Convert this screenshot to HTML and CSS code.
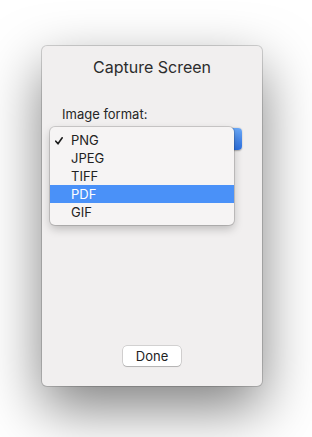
FILE: index.html
```html
<!DOCTYPE html>
<html lang="en">
<head>
    <meta charset="UTF-8">
    <meta name="viewport" content="width=device-width, initial-scale=1.0">
    <title>Capture Screen</title>
    <link rel="stylesheet" href="styles.css">
</head>
<body>
    <div class="window">
        <h1 class="title">Capture Screen</h1>
        <label class="field-label">Image format:</label>

        <div class="popup">
            <div class="popup-arrows"></div>

            <!-- open menu lies over the popup button -->
            <ul class="menu">
                <li class="menu-item checked">
                    <svg class="check" width="8" height="8" viewBox="0 0 8 8">
                        <polyline points="0.8,4.2 3,6.8 7.2,0.8" fill="none" stroke="#1d1d1d" stroke-width="1.6" stroke-linecap="round" stroke-linejoin="round"/>
                    </svg>
                    PNG
                </li>
                <li class="menu-item">JPEG</li>
                <li class="menu-item">TIFF</li>
                <li class="menu-item active">PDF</li>
                <li class="menu-item">GIF</li>
            </ul>
        </div>

        <button class="btn">Done</button>
    </div>
</body>
</html>
```

FILE: styles.css
```css
* {
    margin: 0;
    padding: 0;
    box-sizing: border-box;
}

html, body {
    height: 100%;
}

body {
    font-family: Inter, "Liberation Sans", sans-serif;
    background: #ffffff;
    overflow: hidden;
    padding: 46px 50px 0 42px;
}

.window {
    width: 220px;
    height: 340px;
    background: #f1efef;
    border-radius: 5px;
    display: flex;
    flex-direction: column;
    padding: 11px 20px 20px;
    box-shadow: 0 0 0 1px rgba(0, 0, 0, 0.16), 0 22px 56px rgba(0, 0, 0, 0.5);
}

.title {
    font-size: 16px;
    font-weight: 400;
    line-height: 20px;
    color: #2c2c2c;
    text-align: center;
}

.field-label {
    display: block;
    margin-top: 29px;
    font-size: 13px;
    line-height: 16px;
    color: #262626;
}

.popup {
    position: relative;
    margin: 6px 0 0 -4px;
    width: 184px;
    height: 22px;
    background: #ffffff;
    border-radius: 4px;
    box-shadow: 0 0.5px 1.5px rgba(0, 0, 0, 0.3);
}

.popup-arrows {
    position: absolute;
    right: 0;
    top: 0;
    width: 18px;
    height: 22px;
    border-radius: 0 4px 4px 0;
    background: linear-gradient(#6aa8f7, #2c6fdf);
}

.menu {
    position: absolute;
    left: -8px;
    top: -1px;
    width: 184px;
    padding: 4px 0;
    list-style: none;
    background: #f6f4f4;
    border-radius: 5px;
    box-shadow: 0 0 0 1px rgba(0, 0, 0, 0.14), 0 4px 10px rgba(0, 0, 0, 0.22);
}

.menu-item {
    position: relative;
    height: 18px;
    line-height: 18px;
    padding-left: 21px;
    font-size: 13px;
    color: #222222;
}

.menu-item.active {
    background: #4a91f8;
    color: #ffffff;
}

.check {
    position: absolute;
    left: 5px;
    top: 6px;
}

.btn {
    margin-top: auto;
    align-self: center;
    width: 58px;
    height: 20px;
    font-family: inherit;
    font-size: 13px;
    color: #222222;
    background: #ffffff;
    border: none;
    border-radius: 4px;
    box-shadow: 0 0 0 0.5px rgba(0, 0, 0, 0.25), 0 1px 1px rgba(0, 0, 0, 0.15);
}
```
